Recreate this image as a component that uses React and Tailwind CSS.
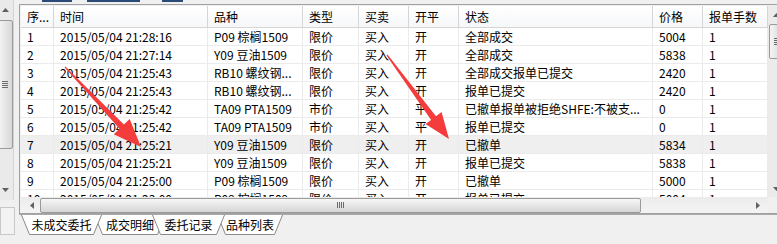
import React from 'react';

const cols = [
  { w: 'w-[33px]', h: '序...' },
  { w: 'w-[154px]', h: '时间' },
  { w: 'w-[95px]', h: '品种' },
  { w: 'w-[56px]', h: '类型' },
  { w: 'w-[50px]', h: '买卖' },
  { w: 'w-[50px]', h: '开平' },
  { w: 'w-[194px]', h: '状态' },
  { w: 'w-[50px]', h: '价格' },
  { w: 'w-[65px]', h: '报单手数' },
];

const rows = [
  ['1', '2015/05/04 21:28:16', 'P09 棕榈1509', '限价', '买入', '开', '全部成交', '5004', '1'],
  ['2', '2015/05/04 21:27:14', 'Y09 豆油1509', '限价', '买入', '开', '全部成交', '5838', '1'],
  ['3', '2015/05/04 21:25:43', 'RB10 螺纹钢...', '限价', '买入', '开', '全部成交报单已提交', '2420', '1'],
  ['4', '2015/05/04 21:25:43', 'RB10 螺纹钢...', '限价', '买入', '开', '报单已提交', '2420', '1'],
  ['5', '2015/05/04 21:25:42', 'TA09 PTA1509', '市价', '买入', '平', '已撤单报单被拒绝SHFE:不被支...', '0', '1'],
  ['6', '2015/05/04 21:25:42', 'TA09 PTA1509', '市价', '买入', '平', '报单已提交', '0', '1'],
  ['7', '2015/05/04 21:25:21', 'Y09 豆油1509', '限价', '买入', '开', '已撤单', '5834', '1'],
  ['8', '2015/05/04 21:25:21', 'Y09 豆油1509', '限价', '买入', '开', '报单已提交', '5838', '1'],
  ['9', '2015/05/04 21:25:00', 'P09 棕榈1509', '限价', '买入', '开', '已撤单', '5000', '1'],
  ['10', '2015/05/04 21:23:00', 'P09 棕榈1509', '限价', '买入', '开', '报单已提交', '5004', '1'],
];

const tabs = [
  { label: '未成交委托', cls: 'w-[81px] ml-[2px] z-20', w: 81 },
  { label: '成交明细', cls: 'w-[72px] -ml-[8px] z-10', w: 72 },
  { label: '委托记录', cls: 'w-[73px] -ml-[14px] z-30', w: 73 },
  { label: '品种列表', cls: 'w-[66px] -ml-[8px] z-0', w: 66 },
];

function Tri({ dir }) {
  const pts = {
    up: '0,4 3.5,0 7,4',
    down: '0,0 7,0 3.5,4',
    left: '4,0 4,7 0,3.5',
    right: '0,0 0,7 4,3.5',
  }[dir];
  const vert = dir === 'up' || dir === 'down';
  return (
    <svg width={vert ? 7 : 4} height={vert ? 4 : 7}>
      <polygon points={pts} fill="#606060" />
    </svg>
  );
}

function Grip({ vertical }) {
  return vertical ? (
    <div className="flex flex-col gap-[1px]">
      <div className="w-[6px] h-[1px] bg-[#6b6b6b]" />
      <div className="w-[6px] h-[1px] bg-[#6b6b6b]" />
      <div className="w-[6px] h-[1px] bg-[#6b6b6b]" />
      <div className="w-[6px] h-[1px] bg-[#6b6b6b]" />
    </div>
  ) : (
    <div className="flex gap-[1px]">
      <div className="w-[1px] h-[6px] bg-[#6b6b6b]" />
      <div className="w-[1px] h-[6px] bg-[#6b6b6b]" />
      <div className="w-[1px] h-[6px] bg-[#6b6b6b]" />
      <div className="w-[1px] h-[6px] bg-[#6b6b6b]" />
    </div>
  );
}

function arrowPoints(tail, tip, headLen, headHalf, shaft) {
  const dx = tip[0] - tail[0];
  const dy = tip[1] - tail[1];
  const len = Math.hypot(dx, dy);
  const u = [dx / len, dy / len];
  const p = [u[1], -u[0]];
  const b = [tip[0] - u[0] * headLen, tip[1] - u[1] * headLen];
  const at = (o, k) => `${(o[0] + p[0] * k).toFixed(1)},${(o[1] + p[1] * k).toFixed(1)}`;
  return [at(tail, 0.6), at(b, shaft), at(b, headHalf), `${tip[0]},${tip[1]}`, at(b, -headHalf), at(b, -shaft), at(tail, -0.6)].join(' ');
}

export default function App() {
  return (
    <div className="relative w-[777px] h-[244px] overflow-hidden bg-[#f0f0f0] flex font-['Microsoft_YaHei','Noto_Sans_CJK_SC',sans-serif] text-[12px] text-black">
      {/* left panel edge */}
      <div className="w-[15px] shrink-0 flex flex-col">
        <div className="-ml-[3px] w-[17px] h-[200px] flex flex-col items-center bg-[#eaeaea] border-r border-[#d4d4d4]">
          <div className="h-[20px] flex items-center justify-center"><Tri dir="up" /></div>
          <div className="w-[15px] h-[129px] rounded-[2px] border border-[#9a9a9a] bg-gradient-to-r from-[#f4f4f4] to-[#d8d8d8] flex items-center justify-center">
            <Grip vertical />
          </div>
          <div className="flex-1" />
          <div className="h-[18px] flex items-center justify-center pb-[3px]"><Tri dir="down" /></div>
        </div>
        <div className="mt-[7px] h-[28px] border border-[#c8c8c8] bg-[#f3f3f3]" />
      </div>
      <div className="w-[4px] shrink-0" />

      {/* main */}
      <div className="w-[790px] shrink-0 flex flex-col">
        <div className="h-[4px] flex">
          <div className="ml-[23px] w-[30px] h-[2px] bg-[#2a4a78]" />
          <div className="ml-[15px] w-[53px] h-[2px] bg-[#2a4a78]" />
          <div className="ml-[22px] w-[21px] h-[2px] bg-[#2a4a78]" />
        </div>
        <div className="border-l border-t border-b border-[#a0a0a0] pl-[1px] pt-[1px]">
          <div className="flex">
            <div className="w-[747px] h-[191px] overflow-hidden bg-white">
              <div className="flex h-[22px] border-b border-[#d5d5d5] bg-gradient-to-b from-white to-[#f6f7f9]">
                {cols.map((c, i) => (
                  <div key={i} className={`${c.w} shrink-0 pl-[6px] leading-[21px] border-r border-[#d5d5d5] whitespace-nowrap overflow-hidden`}>
                    {c.h}
                  </div>
                ))}
              </div>
              {rows.map((r, ri) => (
                <div key={ri} className={`flex h-[18px] border-b border-[#ebebeb] ${ri === 6 ? 'bg-[#efefef]' : 'bg-white'}`}>
                  {r.map((v, ci) => (
                    <div key={ci} className={`${cols[ci].w} shrink-0 pl-[6px] leading-[17px] border-r border-[#ebebeb] whitespace-nowrap overflow-hidden`}>
                      {v}
                    </div>
                  ))}
                </div>
              ))}
            </div>
            {/* vertical scrollbar */}
            <div className="w-[17px] h-[191px] flex flex-col items-center bg-[#ebebeb]">
              <div className="h-[17px] flex items-center justify-center"><Tri dir="up" /></div>
              <div className="w-[15px] h-[35px] mt-[1px] rounded-[2px] border border-[#9a9a9a] bg-gradient-to-r from-[#f4f4f4] to-[#d8d8d8] flex items-center justify-center">
                <Grip vertical />
              </div>
              <div className="flex-1" />
              <div className="h-[17px] flex items-center justify-center"><Tri dir="down" /></div>
            </div>
          </div>
          {/* horizontal scrollbar */}
          <div className="flex h-[16px]">
            <div className="w-[747px] flex items-center bg-gradient-to-b from-[#ececec] to-[#f4f4f4]">
              <div className="w-[19px] flex justify-center pl-[3px]"><Tri dir="left" /></div>
              <div className="w-[601px] h-[15px] rounded-[2px] border border-[#9a9a9a] bg-gradient-to-b from-[#f6f6f6] to-[#d6d6d6] flex items-center justify-center">
                <Grip />
              </div>
              <div className="flex-1" />
              <div className="w-[19px] flex justify-center pr-[2px]"><Tri dir="right" /></div>
            </div>
            <div className="w-[17px] bg-[#f0f0f0]" />
          </div>
        </div>
        {/* tab strip */}
        <div className="border-t border-[#a9a9a9] flex">
          {tabs.map((t, i) => (
            <div key={i} className={`relative shrink-0 h-[21px] flex items-center justify-center ${t.cls}`}>
              <svg className="absolute inset-0" width={t.w} height={21}>
                <path d={`M0.5,0 L8.5,19.5 L${t.w - 8.5},19.5 L${t.w - 0.5},0`} fill="#ffffff" stroke="#8a8a8a" strokeWidth="1" />
              </svg>
              <span className="relative pb-[2px]">{t.label}</span>
            </div>
          ))}
        </div>
      </div>

      {/* annotation arrows */}
      <svg className="absolute inset-0 pointer-events-none" width="777" height="244">
        <polygon points={arrowPoints([65, 67], [141, 147], 28, 11, 3)} fill="#f43c3c" />
        <polygon points={arrowPoints([387, 55], [449, 139], 26, 10, 3)} fill="#f43c3c" />
      </svg>
    </div>
  );
}
